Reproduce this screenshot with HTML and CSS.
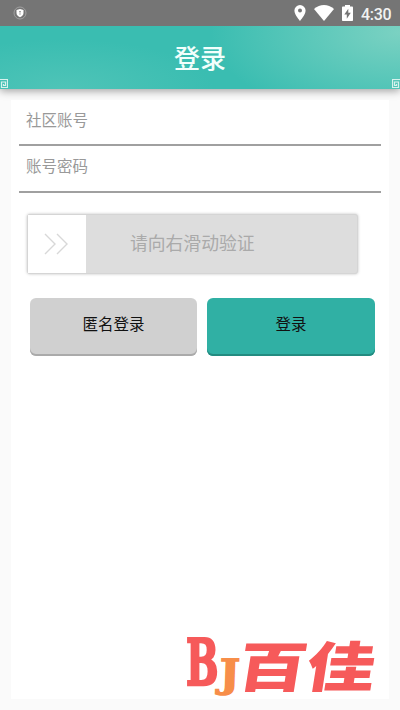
FILE: index.html
```html
<!DOCTYPE html>
<html lang="zh-CN">
<head>
<meta charset="utf-8">
<title>登录</title>
<link rel="stylesheet" href="styles.css">
</head>
<body>
<div class="status">
  <svg class="shield" width="14" height="14" viewBox="0 0 14 14"><circle cx="7" cy="7" r="6" fill="none" stroke="#aaa" stroke-width=".8"/><path d="M3.500 4 7 3l3.500 1v3c0 2-1.500 3.500-3.500 4.300C5 10.500 3.500 9 3.500 7z" fill="#fff"/><path d="M7 5v4M6 5.500h2" stroke="#999" stroke-width=".8"/></svg>
  <div class="indicators">
    <svg class="pin" width="12" height="16" viewBox="0 0 12 16"><path fill="#fff" fill-rule="evenodd" d="M6 0a5.600 5.600 0 0 0-5.600 5.600C.4 9.800 6 16 6 16s5.600-6.200 5.600-10.400A5.600 5.600 0 0 0 6 0zm0 3.600a2 2 0 1 1 0 4 2 2 0 0 1 0-4z"/></svg>
    <svg class="wifi" width="20" height="16" viewBox="0 0 20 16"><path fill="#fff" d="M0 4C6-1.200 14-1.200 20 4L10 16z"/></svg>
    <svg class="battery" width="11" height="16" viewBox="0 0 11 16"><path fill="#fff" d="M3 0h5v1.600h2.200q.8 0 .8.800v12.800q0 .8-.8.800H.8q-.8 0-.8-.8V2.400q0-.8.8-.8H3z"/><path fill="#757575" d="M6.300 3.700 2.300 9.500h2.500v4.300l4-6H6.300z"/></svg>
    <span class="time">4:30</span>
  </div>
</div>
<header class="header">
  <svg class="fret" width="8" height="9" viewBox="0 0 8 9"><path d="M0 .5h7.500v8h-6V3h4v3.500h-2V5" fill="none" stroke="#d7f2ed" stroke-width="1.200"/></svg>
  <h1>登录</h1>
  <svg class="fret flipped" width="8" height="9" viewBox="0 0 8 9"><path d="M0 .5h7.500v8h-6V3h4v3.500h-2V5" fill="none" stroke="#d7f2ed" stroke-width="1.200"/></svg>
</header>
<main class="panel">
  <div class="field">社区账号</div>
  <div class="field second">账号密码</div>
  <div class="slider">
    <div class="handle"><svg width="24" height="22" viewBox="0 0 24 22"><path d="M1 1l10 10L1 21M13 1l10 10-10 10" fill="none" stroke="#d8d8d8" stroke-width="1.400"/></svg></div>
    <div class="hint">请向右滑动验证</div>
  </div>
  <div class="actions">
    <button class="btn guest">匿名登录</button>
    <button class="btn login">登录</button>
  </div>
  <svg class="brand" width="190" height="60" viewBox="0 0 190 60">
    <text class="letter-b" transform="translate(8 47) scale(.74 1.210)" font-size="52">B</text>
    <text class="letter-j" transform="translate(41 48.500) skewX(-2) scale(1 .9)" font-size="43">J</text>
    <text class="name" transform="translate(57.500 49) skewX(-9) scale(1.270 1)" font-size="54">百佳</text>
  </svg>
</main>
</body>
</html>
```
FILE: styles.css
```css
* { box-sizing: border-box; }
body {
  margin: 0;
  height: 710px;
  overflow: hidden;
  background: #fafafa;
  font-family: "Noto Sans CJK SC", sans-serif;
}
.status {
  position: relative;
  z-index: 1;
  height: 26px;
  padding: 0 9px 0 13px;
  background: #757575;
  display: flex;
  align-items: center;
  justify-content: space-between;
}
.indicators { display: flex; align-items: center; }
.wifi { margin-left: 8px; }
.battery { margin-left: 8px; }
.time {
  margin-left: 8px;
  font: 500 16px/20px Roboto, sans-serif;
  color: #f2f2f2;
  width: 30px;
  white-space: nowrap;
  padding-top: 3px;
  letter-spacing: -.3px;
}
.header {
  height: 63px;
  display: flex;
  align-items: flex-end;
  justify-content: space-between;
  background:
    radial-gradient(ellipse 190px 90px at 100% 10%, rgba(130,212,196,.9), rgba(130,212,196,0)),
    radial-gradient(ellipse 150px 50px at 16% 100%, rgba(90,200,187,.65), rgba(90,200,187,0)),
    #3abdb1;
  box-shadow: 0 2px 8px rgba(0,0,0,.36);
}
.header h1 {
  margin: 0 0 2px;
  align-self: center;
  font-size: 26px;
  line-height: 36px;
  font-weight: 500;
  color: #f2fffc;
}
.fret { display: block; margin-bottom: 1px; }
.flipped { transform: scaleX(-1); }
.panel {
  margin: 11px 11px 0;
  height: 599px;
  padding: 0 8px;
  background: #fff;
  display: flex;
  flex-direction: column;
}
.field {
  height: 46px;
  padding: 8px 7px 0;
  border-bottom: 2px solid #a0a0a0;
  color: #999;
  font-size: 15.500px;
  line-height: 23px;
}
.second { height: 47px; padding-top: 8px; }
.slider {
  display: flex;
  width: 331px;
  height: 60px;
  margin: 21px 0 0 8px;
  border: 1px solid #d5d5d5;
  border-radius: 3px;
  background: #ddd;
  box-shadow: 0 0 3px rgba(0,0,0,.25);
}
.handle {
  width: 58px;
  padding-right: 2px;
  background: #fff;
  display: flex;
  align-items: center;
  justify-content: center;
}
.hint {
  flex: 1;
  padding-left: 44px;
  color: #aaa;
  font-size: 17.800px;
  line-height: 55px;
}
.actions { display: flex; gap: 10px; margin: 24px 0 0 11px; }
.btn {
  height: 58px;
  padding: 0 0 8px;
  border: 0;
  border-radius: 6px;
  font: 400 15.500px/24px "Noto Sans CJK SC", sans-serif;
  color: #111;
}
.guest { width: 167px; background: #d0d0d0; box-shadow: inset 0 -2px #aaa; }
.login { width: 168px; background: #30b0a4; box-shadow: inset 0 -2px #238b80; }
.brand { margin: auto 0 1px 159px; overflow: visible; }
.letter-b { font-family: "DejaVu Serif"; font-weight: 700; fill: #f65a5a; stroke: #f65a5a; stroke-width: 2; }
.letter-j { font-family: "DejaVu Serif"; font-weight: 700; fill: #f78e49; stroke: #f78e49; stroke-width: 1.500; }
.name { font-family: "Noto Sans CJK SC"; font-weight: 900; fill: #f65a5a; }
```
